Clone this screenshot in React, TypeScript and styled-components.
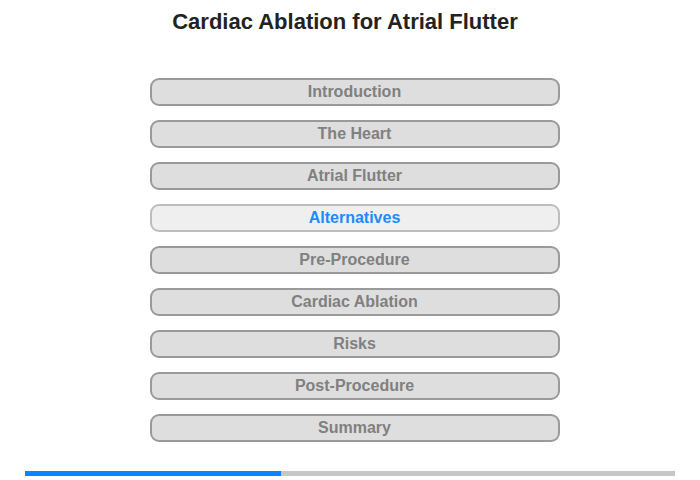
import styled, { createGlobalStyle } from "styled-components";

const GlobalStyle = createGlobalStyle`
  html, body {
    margin: 0;
    padding: 0;
    background: #ffffff;
  }
  body {
    font-family: "Liberation Sans", Arial, sans-serif;
  }
`;

const Page = styled.div`
  width: 700px;
  height: 480px;
  display: flex;
  flex-direction: column;
  align-items: center;
  box-sizing: border-box;
`;

const Title = styled.h1`
  margin: 9px 10px 0 0;
  font-size: 22px;
  line-height: 26px;
  font-weight: bold;
  color: #222222;
  text-align: center;
`;

const Menu = styled.nav`
  margin: 43px 0 0 9px;
  display: flex;
  flex-direction: column;
  gap: 14px;
`;

const MenuButton = styled.button<{ $active?: boolean }>`
  width: 410px;
  height: 28px;
  box-sizing: border-box;
  border: 2px solid ${(p) => (p.$active ? "#bdbdbd" : "#9a9a9a")};
  border-radius: 9px;
  background: ${(p) => (p.$active ? "#efefef" : "#dedede")};
  color: ${(p) => (p.$active ? "#1a8cff" : "#808080")};
  font-family: "Liberation Sans", Arial, sans-serif;
  font-size: 16px;
  font-weight: bold;
  padding: 0;
  cursor: pointer;
`;

const Track = styled.div`
  margin-top: 29px;
  width: 650px;
  height: 5px;
  background: #c6c6c6;
`;

const Fill = styled.div`
  height: 100%;
  background: #0a84ff;
`;

const chapters = [
  "Introduction",
  "The Heart",
  "Atrial Flutter",
  "Alternatives",
  "Pre-Procedure",
  "Cardiac Ablation",
  "Risks",
  "Post-Procedure",
  "Summary",
];

export default function App() {
  const current = 3;
  const progress = 256 / 650;

  return (
    <Page>
      <GlobalStyle />
      <Title>Cardiac Ablation for Atrial Flutter</Title>
      <Menu>
        {chapters.map((c, i) => (
          <MenuButton key={c} $active={i === current}>
            {c}
          </MenuButton>
        ))}
      </Menu>
      <Track>
        <Fill style={{ width: `${progress * 100}%` }} />
      </Track>
    </Page>
  );
}
